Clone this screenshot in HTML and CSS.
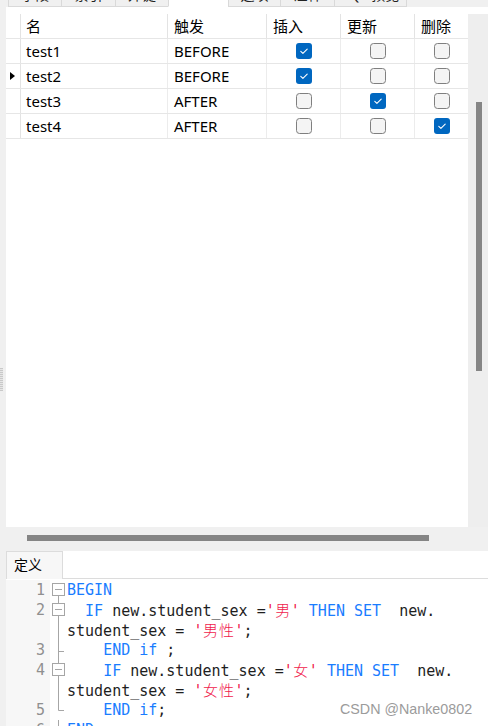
FILE: index.html
```html
<!DOCTYPE html>
<html lang="zh">
<head>
<meta charset="utf-8">
<title>触发器</title>
<link rel="stylesheet" href="styles.css">
</head>
<body>
<div class="tabs">
  <div class="tab w53">字段</div>
  <div class="tab w54">索引</div>
  <div class="tab w53">外键</div>
  <div class="tab w60 active">触发器</div>
  <div class="tab w52">选项</div>
  <div class="tab w54">注释</div>
  <div class="tab w73 last">SQL 预览</div>
</div>

<div class="upper">
  <div class="grid">
    <div class="row head">
      <div class="c ind"></div>
      <div class="c">名</div>
      <div class="c">触发</div>
      <div class="c">插入</div>
      <div class="c">更新</div>
      <div class="c">删除</div>
    </div>
    <div class="row">
      <div class="c ind"></div>
      <div class="c">test1</div>
      <div class="c">BEFORE</div>
      <div class="c ck"><svg class="box" viewBox="0 0 16 16"><rect x="0" y="0" width="16" height="16" rx="3" class="on"/><path d="M4.8 8.4 L6.9 10.3 L11.2 6.1" class="tick"/></svg></div>
      <div class="c ck"><svg class="box" viewBox="0 0 16 16"><rect x="0.5" y="0.5" width="15" height="15" rx="3" class="off"/></svg></div>
      <div class="c ck"><svg class="box" viewBox="0 0 16 16"><rect x="0.5" y="0.5" width="15" height="15" rx="3" class="off"/></svg></div>
    </div>
    <div class="row">
      <div class="c ind"><span class="arrow"></span></div>
      <div class="c">test2</div>
      <div class="c">BEFORE</div>
      <div class="c ck"><svg class="box" viewBox="0 0 16 16"><rect x="0" y="0" width="16" height="16" rx="3" class="on"/><path d="M4.8 8.4 L6.9 10.3 L11.2 6.1" class="tick"/></svg></div>
      <div class="c ck"><svg class="box" viewBox="0 0 16 16"><rect x="0.5" y="0.5" width="15" height="15" rx="3" class="off"/></svg></div>
      <div class="c ck"><svg class="box" viewBox="0 0 16 16"><rect x="0.5" y="0.5" width="15" height="15" rx="3" class="off"/></svg></div>
    </div>
    <div class="row">
      <div class="c ind"></div>
      <div class="c">test3</div>
      <div class="c">AFTER</div>
      <div class="c ck"><svg class="box" viewBox="0 0 16 16"><rect x="0.5" y="0.5" width="15" height="15" rx="3" class="off"/></svg></div>
      <div class="c ck"><svg class="box" viewBox="0 0 16 16"><rect x="0" y="0" width="16" height="16" rx="3" class="on"/><path d="M4.8 8.4 L6.9 10.3 L11.2 6.1" class="tick"/></svg></div>
      <div class="c ck"><svg class="box" viewBox="0 0 16 16"><rect x="0.5" y="0.5" width="15" height="15" rx="3" class="off"/></svg></div>
    </div>
    <div class="row">
      <div class="c ind"></div>
      <div class="c">test4</div>
      <div class="c">AFTER</div>
      <div class="c ck"><svg class="box" viewBox="0 0 16 16"><rect x="0.5" y="0.5" width="15" height="15" rx="3" class="off"/></svg></div>
      <div class="c ck"><svg class="box" viewBox="0 0 16 16"><rect x="0.5" y="0.5" width="15" height="15" rx="3" class="off"/></svg></div>
      <div class="c ck"><svg class="box" viewBox="0 0 16 16"><rect x="0" y="0" width="16" height="16" rx="3" class="on"/><path d="M4.8 8.4 L6.9 10.3 L11.2 6.1" class="tick"/></svg></div>
    </div>
  </div>
  <div class="vtrack"><div class="vthumb"></div></div>
</div>

<div class="hbar"><div class="hthumb"></div></div>

<div class="lower">
  <div class="ltabs"><div class="ltab">定义</div></div>
  <div class="editor">
    <div class="line"><span class="ln">1</span><svg class="fold" viewBox="0 0 17 20"><rect x="2.5" y="3.5" width="12" height="12" class="fbox"/><path d="M5 9.5 H12 M8.5 15.5 V20" class="fl"/></svg><span class="txt"><span class="kw">BEGIN</span></span></div>
    <div class="line"><span class="ln">2</span><svg class="fold" viewBox="0 0 17 20"><path d="M8.5 0 V3.5 M8.5 15.5 V20" class="fl"/><rect x="2.5" y="3.5" width="12" height="12" class="fbox"/><path d="M5 9.5 H12" class="fl"/></svg><span class="txt">  <span class="kw">IF</span> new.student_sex =<span class="st">'<span class="cj">男</span>'</span> <span class="kw">THEN</span> <span class="kw">SET</span>  new.</span></div>
    <div class="line"><span class="ln"></span><svg class="fold" viewBox="0 0 17 20"><path d="M8.5 0 V20" class="fl"/></svg><span class="txt">student_sex = <span class="st">'<span class="cj">男</span><span class="cj">性</span>'</span>;</span></div>
    <div class="line"><span class="ln">3</span><svg class="fold" viewBox="0 0 17 20"><path d="M8.5 0 V20 M8.5 11.5 H14" class="fl"/></svg><span class="txt">    <span class="kw">END</span> <span class="kw">if</span> ;</span></div>
    <div class="line"><span class="ln">4</span><svg class="fold" viewBox="0 0 17 20"><path d="M8.5 0 V3.5 M8.5 15.5 V20" class="fl"/><rect x="2.5" y="3.5" width="12" height="12" class="fbox"/><path d="M5 9.5 H12" class="fl"/></svg><span class="txt">    <span class="kw">IF</span> new.student_sex =<span class="st">'<span class="cj">女</span>'</span> <span class="kw">THEN</span> <span class="kw">SET</span>  new.</span></div>
    <div class="line"><span class="ln"></span><svg class="fold" viewBox="0 0 17 20"><path d="M8.5 0 V20" class="fl"/></svg><span class="txt">student_sex = <span class="st">'<span class="cj">女</span><span class="cj">性</span>'</span>;</span></div>
    <div class="line"><span class="ln">5</span><svg class="fold" viewBox="0 0 17 20"><path d="M8.5 0 V10.5 H14" class="fl"/></svg><span class="txt">    <span class="kw">END</span> <span class="kw">if</span>;</span></div>
    <div class="line"><span class="ln">6</span><svg class="fold" viewBox="0 0 17 20"><path d="M8.5 0 V10.5 H14" class="fl"/></svg><span class="txt"><span class="kw">END</span></span></div>
  </div>
</div>

<div class="grip"></div>
<div class="watermark">CSDN @Nanke0802</div>
</body>
</html>
```

FILE: styles.css
```css
html, body {
  margin: 0;
  padding: 0;
}
body {
  background: #f0f0f0;
  font-family: "Noto Sans", "Noto Sans CJK SC", sans-serif;
  font-size: 15px;
  color: #000;
  width: 488px;
  height: 726px;
  overflow: hidden;
  position: relative;
}

/* top tab strip (mostly scrolled out of view) */
.tabs {
  display: flex;
  margin-top: -22px;
  padding-left: 8px;
  height: 29px;
}
.tab {
  box-sizing: border-box;
  height: 29px;
  border-left: 1px solid #d9d9d9;
  border-bottom: 1px solid #d9d9d9;
  background: #f0f0f0;
  font-size: 14px;
  color: #222;
  display: flex;
  align-items: flex-end;
  justify-content: center;
  line-height: 18px;
  padding-bottom: 2px;
}
.tab.active {
  background: #fff;
  border-bottom-color: #fff;
  padding-bottom: 9px;
}
.tab.last { border-right: 1px solid #d9d9d9; }
.w52 { width: 52px; }
.w53 { width: 53px; }
.w54 { width: 54px; }
.w60 { width: 60px; }
.w73 { width: 73px; }

/* upper panel with grid */
.upper {
  margin-left: 6px;
  height: 520px;
  background: #fff;
  display: flex;
}
.grid {
  width: 462px;
  padding-top: 7px;
}
.row {
  display: grid;
  grid-template-columns: 15px 147px 99px 74px 74px 53px;
  height: 25px;
  box-sizing: border-box;
  border-bottom: 1px solid #e6e6e6;
}
.c {
  box-sizing: border-box;
  border-right: 1px solid #ececec;
  padding-left: 6px;
  display: flex;
  align-items: center;
  white-space: nowrap;
  line-height: 24px;
}
.row .c:first-child + .c { padding-left: 5px; }
.head .c { border-right-color: #e3e3e3; }
.c:last-child { border-right: none; }
.c.ind {
  padding-left: 4px;
  border-right-color: #e3e3e3;
}
.c.ck {
  justify-content: center;
  padding-left: 0;
}
.arrow {
  width: 0;
  height: 0;
  border-left: 5px solid #000;
  border-top: 4.5px solid transparent;
  border-bottom: 4.5px solid transparent;
}
.box {
  width: 16px;
  height: 16px;
  display: block;
}
.on { fill: #0067c0; }
.off { fill: #f4f4f4; stroke: #7f7f7f; stroke-width: 1; }
.tick { fill: none; stroke: #fff; stroke-width: 1.1; stroke-linecap: round; stroke-linejoin: round; }

.vtrack {
  width: 20px;
  margin-top: 7px;
  background: #eeeeee;
}
.vthumb {
  margin-top: 88px;
  margin-left: 8px;
  width: 6px;
  height: 269px;
  background: #858585;
}

/* horizontal scrollbar */
.hbar {
  height: 23px;
  padding-top: 8px;
  box-sizing: border-box;
}
.hthumb {
  margin-left: 27px;
  width: 402px;
  height: 6px;
  background: #858585;
}

/* lower definition panel */
.lower {
  margin-left: 6px;
}
.ltabs {
  margin-top: 1px;
  height: 27px;
  background: #fff;
  border-bottom: 1px solid #dcdcdc;
  display: flex;
}
.ltab {
  box-sizing: border-box;
  width: 57px;
  height: 28px;
  margin-bottom: -1px;
  background: #f7f7f7;
  border: 1px solid #dcdcdc;
  border-bottom: none;
  font-size: 14px;
  line-height: 25px;
  padding-left: 7px;
  color: #000;
}
.editor {
  background: #fff;
  padding-top: 1px;
  font-family: "DejaVu Sans Mono", "Noto Sans CJK SC", monospace;
  font-size: 15px;
  color: #1e1e1e;
}
.line {
  display: flex;
  height: 20px;
  line-height: 20px;
}
.ln {
  width: 44px;
  flex: none;
  box-sizing: border-box;
  padding-right: 5px;
  text-align: right;
  color: #8f8f8f;
  background: #f7f7f7;
}
.fold {
  width: 17px;
  height: 20px;
  flex: none;
  display: block;
}
.fbox { fill: #fff; stroke: #a6a6a6; stroke-width: 1; }
.fl { fill: none; stroke: #a6a6a6; stroke-width: 1; }
.txt {
  white-space: pre;
}
.kw { color: #1a7dff; }
.st { color: #f01a4c; }
.cj {
  display: inline-block;
  width: 2ch;
  text-align: center;
  font-family: "Noto Sans CJK SC", sans-serif;
  font-weight: 300;
}

.grip {
  position: absolute;
  left: 0;
  top: 368px;
  width: 3px;
  height: 23px;
  background: repeating-linear-gradient(#c9c9c9 0 1px, #e6e6e6 1px 2px);
}
.watermark {
  position: absolute;
  left: 340px;
  top: 701px;
  font-family: "Liberation Sans", Arial, sans-serif;
  font-size: 14.3px;
  color: #9b9b9b;
  text-shadow: 0 0 2px #fff, 0 0 2px #fff;
  white-space: nowrap;
}
```
